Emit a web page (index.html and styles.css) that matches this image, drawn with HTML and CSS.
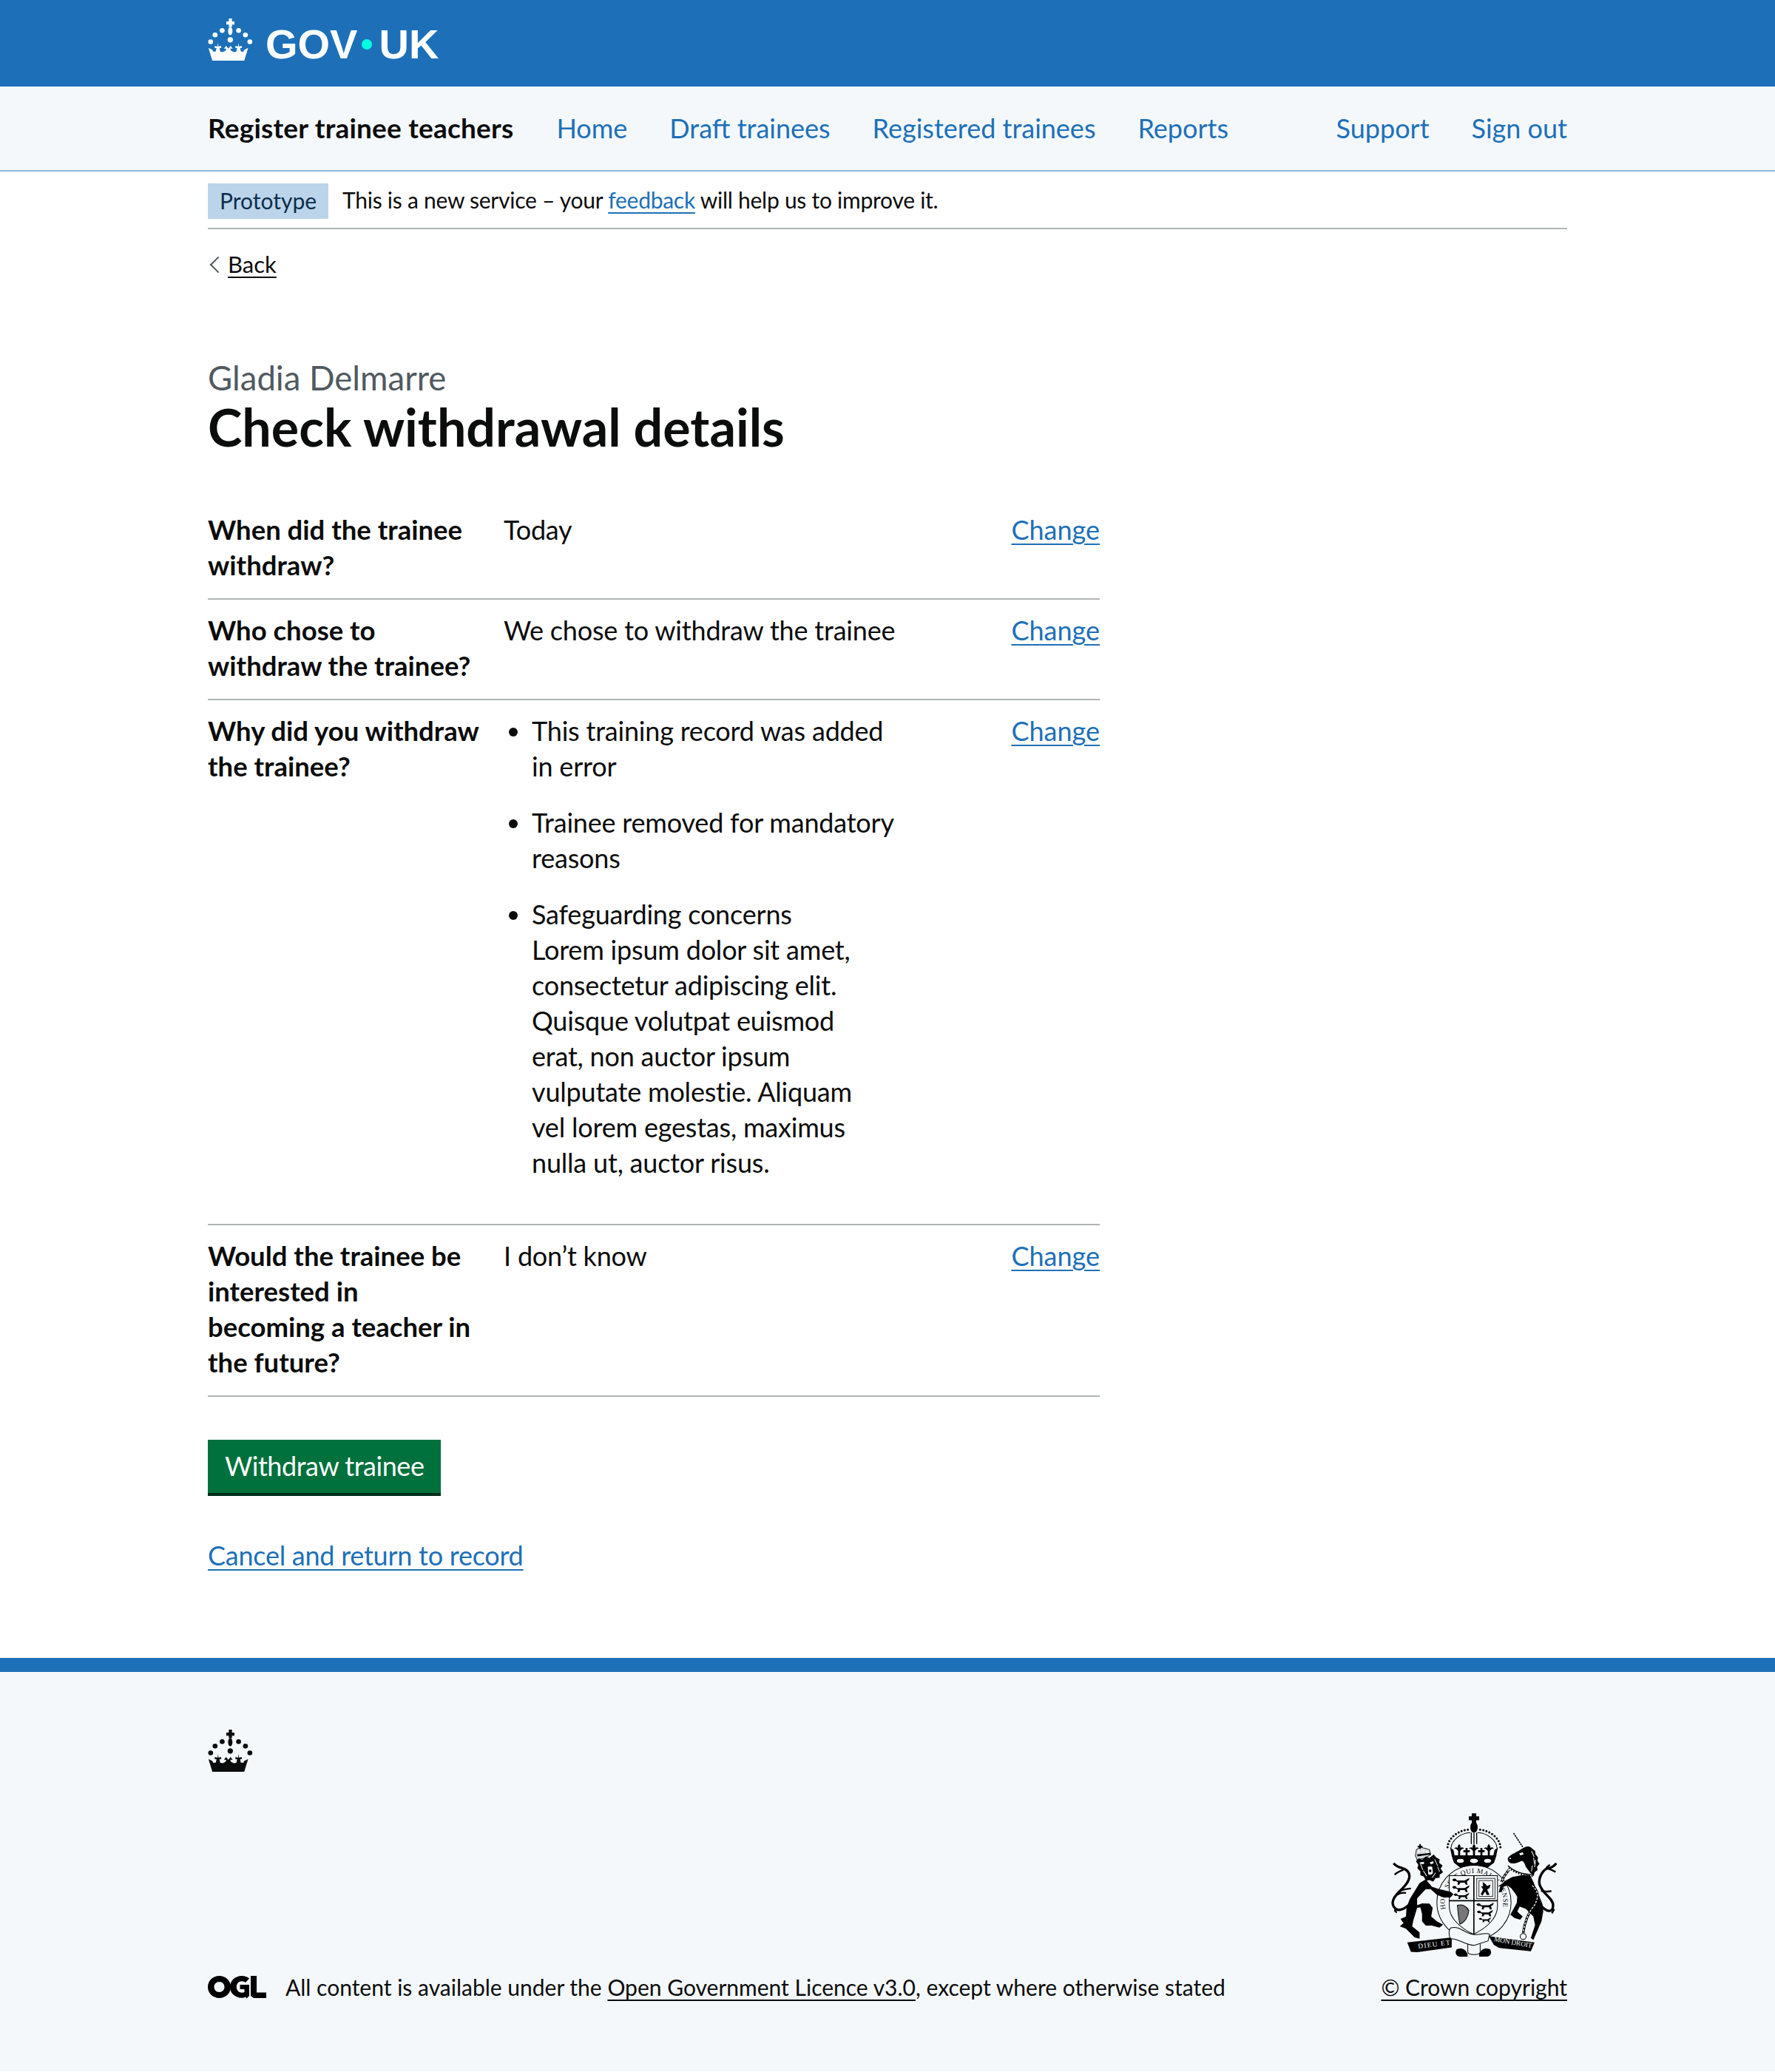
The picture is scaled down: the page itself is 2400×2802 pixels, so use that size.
FILE: index.html
```html
<!DOCTYPE html>
<html lang="en">
<head>
  <meta charset="UTF-8" />
  <title>Check withdrawal details - Register trainee teachers</title>
  <link rel="stylesheet" href="styles.css">
</head>
<body>

  <svg class="defs" aria-hidden="true">
    <symbol id="crown" viewBox="62 75 183 172">
      <path d="M147 75h13v12h10v13h-10v10h-13v-10h-10v-13h10z"/>
      <ellipse cx="153" cy="126" rx="9" ry="17"/>
      <circle cx="120" cy="124" r="10"/><circle cx="187" cy="124" r="10"/>
      <circle cx="91" cy="142" r="10"/><circle cx="215" cy="142" r="10"/>
      <circle cx="73" cy="170" r="10"/><circle cx="233" cy="170" r="10"/>
      <circle cx="153" cy="162" r="11"/>
      <path d="M64 195l16 8 4 8 10-2 3-13-8-1 2-8 10 3 2-16 2 16 10-3 2 8-8 1 3 14 10 2 12-6 3-8h-10l9-11 9 11 9-11 9 11h-10l3 8 12 6 10-2 3-14-8-1 2-8 10 3 2-16 2 16 10-3 2 8-8 1 3 13 10 2 4-8 16-8-16 52H80z"/>
    </symbol>
    <symbol id="passant" viewBox="0 0 76 26">
      <path d="M0 7l8-5 7 2 4 6h30l10-6 9-4-4 9-7 4 3 13h-7l-4-8H32l-4 8h-7l2-10-9-4-7 1z"/>
    </symbol>
  </svg>

  <header class="masthead">
    <div class="wrap masthead-inner">
      <svg class="crown"><use href="#crown"/></svg>
      <a class="logotype" href="#">GOV<span class="logo-dot"></span>UK</a>
    </div>
  </header>

  <nav class="service-nav">
    <div class="wrap nav-inner">
      <a class="service-name" href="#">Register trainee teachers</a>
      <a href="#">Home</a>
      <a href="#">Draft trainees</a>
      <a href="#">Registered trainees</a>
      <a href="#">Reports</a>
      <a class="nav-push" href="#">Support</a>
      <a href="#">Sign out</a>
    </div>
  </nav>

  <div class="wrap">
    <div class="phase-banner">
      <strong class="tag">Prototype</strong>
      <span class="phase-text">This is a new service – your <a class="link" href="#">feedback</a> will help us to improve it.</span>
    </div>

    <a class="back-link" href="#">Back</a>

    <main class="content">
      <span class="caption">Gladia Delmarre</span>
      <h1>Check withdrawal details</h1>

      <dl class="summary">
        <div class="summary-row">
          <dt>When did the trainee withdraw?</dt>
          <dd>Today</dd>
          <dd class="action"><a class="link" href="#">Change</a></dd>
        </div>
        <div class="summary-row">
          <dt>Who chose to withdraw the trainee?</dt>
          <dd>We chose to withdraw the trainee</dd>
          <dd class="action"><a class="link" href="#">Change</a></dd>
        </div>
        <div class="summary-row">
          <dt>Why did you withdraw the trainee?</dt>
          <dd>
            <ul class="reasons">
              <li>This training record was added in error</li>
              <li><span class="nowrap">Trainee removed for mandatory</span> reasons</li>
              <li>Safeguarding concerns<br>Lorem ipsum dolor sit amet, consectetur adipiscing elit. Quisque volutpat euismod erat, non auctor ipsum vulputate molestie. Aliquam vel lorem egestas, maximus nulla ut, auctor risus.</li>
            </ul>
          </dd>
          <dd class="action"><a class="link" href="#">Change</a></dd>
        </div>
        <div class="summary-row">
          <dt>Would the trainee be interested in becoming a teacher in the future?</dt>
          <dd>I don’t know</dd>
          <dd class="action"><a class="link" href="#">Change</a></dd>
        </div>
      </dl>

      <button class="button" type="submit">Withdraw trainee</button>
      <p class="cancel"><a class="link" href="#">Cancel and return to record</a></p>
    </main>
  </div>

  <footer class="footer">
    <div class="wrap">
      <svg class="crown crown-footer"><use href="#crown"/></svg>
      <div class="footer-meta">
        <div class="licence">
          <svg class="ogl" viewBox="0 0 79 32">
            <path fill-rule="evenodd" d="M15.5 1C24 1 31 7.500 31 16S24 31 15.500 31 0 24.500 0 16 7 1 15.500 1zm0 8C11.500 9 8.500 12 8.500 16s3 7 7 7 7-3 7-7-3-7-7-7z"/>
            <path d="M46 1c4 0 7.500 1.300 10 3.500L51 10c-1.300-1-3-1.700-5-1.700-4.200 0-7.200 3.300-7.200 7.700s3 7.700 7.200 7.700c1.300 0 2.500-.3 3.500-.8V19h-6v-6h12.500v15l-3.500 3.500-1.500-2c-1.500.8-3.200 1.200-5 1.200C37 30.700 30 24.500 30 16S37 1 46 1z"/>
            <path d="M58 1h8v22.500h13V31H62l-4-3z"/>
          </svg>
          <span>All content is available under the <a class="footer-link" href="#">Open Government Licence v3.0</a>, except where otherwise stated</span>
        </div>
        <div class="copyright">
          <svg class="arms" viewBox="70 65 670 585">
            <!-- crown -->
            <path d="M396 68h18v12h12v16h-12v10h-18V96h-12V80h12z"/>
            <ellipse cx="405" cy="124" rx="15" ry="22"/>
            <path class="dots" d="M298 205c2-40 50-72 92-72M512 205c-2-40-50-72-92-72"/>
            <path class="arch" d="M312 208c2-32 40-60 78-62M498 208c-2-32-40-60-78-62"/>
            <path d="M392 146h4v46h-4zM403 146h4v46h-4zM414 146h4v46h-4z"/>
            <g id="fleurs">
              <path transform="translate(345 222)" d="M0-30c6 6 8 12 4 18 4-6 14-6 16 2-4-2-8-2-10 2l-6 6v22h-8v-22l-6-6c-2-4-6-4-10-2 2-8 12-8 16-2-4-6-2-12 4-18z"/>
              <path transform="translate(405 222)" d="M0-30c6 6 8 12 4 18 4-6 14-6 16 2-4-2-8-2-10 2l-6 6v22h-8v-22l-6-6c-2-4-6-4-10-2 2-8 12-8 16-2-4-6-2-12 4-18z"/>
              <path transform="translate(465 222)" d="M0-30c6 6 8 12 4 18 4-6 14-6 16 2-4-2-8-2-10 2l-6 6v22h-8v-22l-6-6c-2-4-6-4-10-2 2-8 12-8 16-2-4-6-2-12 4-18z"/>
              <path d="M371 208h8v9h9v8h-9v20h-8v-20h-9v-8h9zM431 208h8v9h9v8h-9v20h-8v-20h-9v-8h9zM308 206l14 10 6 28h-12zM502 206l-14 10-6 28h12z"/>
            </g>
            <path d="M314 238h182l-10 30-26 20H350l-26-20z"/>
            <g class="paper"><ellipse cx="350" cy="260" rx="14" ry="8"/><ellipse cx="405" cy="260" rx="16" ry="9"/><ellipse cx="460" cy="260" rx="14" ry="8"/></g>

            <!-- garter and shield -->
            <circle class="paper ring" cx="405" cy="428" r="150"/>
            <path id="garter" fill="none" d="M303 487A118 118 0 1 1 470 526"/>
            <text class="garter-text"><textPath href="#garter" startOffset="34">HONI SOIT QUI MAL Y PENSE</textPath></text>
            <path class="paper ring" d="M305 320h195v125c0 50-50 90-97 112-47-22-98-62-98-112z"/>
            <path d="M402 320h5v237h-5zM305 419h195v5H305z"/>
            <use href="#passant" x="316" y="328" width="80" height="30"/>
            <use href="#passant" x="316" y="358" width="80" height="30"/>
            <use href="#passant" x="322" y="388" width="72" height="28"/>
            <rect class="frame" x="416" y="331" width="74" height="82"/>
            <rect class="frame" x="425" y="340" width="56" height="64"/>
            <path d="M440 346l10 6 8 10 14-6-4 14-10 6 10 22h-12l-6-14-10 16-8-4 10-20-8-12 8-2z"/>
            <use href="#passant" x="414" y="428" width="80" height="30"/>
            <use href="#passant" x="416" y="458" width="74" height="28"/>
            <use href="#passant" x="424" y="486" width="56" height="26"/>
            <path class="harp ring" d="M338 440c20-6 38 4 46 22-2 26-18 48-36 54-6-24-8-50-10-76z"/>

            <!-- lion -->
            <g transform="translate(60 150)">
              <path class="tail" d="M85 285C60 310 30 320 18 290 8 262 40 240 62 215 85 190 92 165 72 148 58 136 35 140 20 120"/>
              <path class="tail thin" d="M50 230C62 226 76 222 90 222M36 246C46 240 58 238 70 240M60 146C50 150 36 154 24 166M28 300C26 310 22 316 34 318"/>
              <path d="M150 185L175 215 205 225 250 235 262 245 250 258 225 258 195 248 170 225 150 225 115 262 115 290 135 282 165 283 178 300 172 335 195 355 220 368 205 380 175 372 150 372 135 355 135 325 128 298 115 300 100 350 95 375 125 400 125 425 105 420 85 400 70 385 45 375 60 362 48 345 70 335 72 300 85 265 110 225 125 200Z"/>
              <path class="crest" d="M108 90L112 65 128 55 150 60 165 65 170 85 145 100 115 105Z"/>
              <path d="M124 42h6v8h7v6h-7v6h-6v-6h-7v-6h7zM114 84l54-6 1 6-52 8z"/>
              <circle class="paper" cx="122" cy="72" r="4"/><circle class="paper" cx="140" cy="70" r="4"/><circle class="paper" cx="156" cy="74" r="4"/>
              <path d="M110 112L122 100 135 106 150 92 165 98 182 84 192 96 206 104 204 118 218 130 210 142 220 156 206 166 206 178 190 180 180 194 165 188 150 190 142 174 128 168 128 152 116 140 120 126Z"/>
              <path class="mane" d="M126 116l12 30M140 150l14 22M186 104l12 26M198 134l8 20M190 158l-14 20"/>
              <path class="paper" d="M128 116l14-2 2 8-12 2zM166 116l14-4 2 8-12 4zM158 134c6-2 14-2 18 0l3 24c-2 8-14 10-19 6z"/>
              <path d="M163 146c3-1 7-1 10 0l-1 10h-8z"/>
            </g>

            <!-- unicorn -->
            <g transform="translate(420 120)">
              <path class="horn" d="M145 28L182 84"/>
              <path d="M122 128C135 112 160 105 178 92 190 84 205 78 212 86L222 120 225 150 215 192 195 165C190 150 186 142 178 140 165 146 150 152 138 150 128 150 120 140 122 128Z"/>
              <path d="M210 82L222 92 232 100 234 114 244 126 242 140 250 152 240 164 242 178 230 186 226 202 215 190 225 150Z"/>
              <path class="mane" d="M218 100l10 24M226 128l4 24M220 160l-2 22M234 136l-4 30"/>
              <path class="paper" d="M168 110l14-4 4 8-14 4zM128 130l5-3 2 4-4 3z"/>
              <path class="collar" d="M122 160C150 186 190 196 226 196"/>
              <path class="beads" d="M126 168C150 190 190 200 222 202"/>
              <path d="M85 268L92 240 110 222 140 205 180 198 212 198 225 225 235 250 250 285 262 315 265 345 258 385 245 415 225 460 215 452 232 400 225 365 205 345 195 335 170 325 160 345 182 365 172 378 150 372 132 358 150 325 158 310 160 285 150 270 135 250 120 240 105 245 97 265Z"/>
              <path class="tail" d="M255 320C275 345 305 355 305 320 305 290 262 275 250 235 245 205 265 175 285 170 300 168 310 160 318 150"/>
              <path class="tail thin" d="M285 172C295 175 305 178 315 185M275 174C278 168 282 162 292 156M256 262C270 262 282 268 298 262M300 352C304 346 306 340 310 336"/>
              <path class="chain" d="M126 176L106 204 96 226M220 240C245 262 250 285 228 322 205 350 190 385 184 432"/>
              <path class="chain-link" d="M126 176L106 204 96 226M220 240C245 262 250 285 228 322 205 350 190 385 184 432"/>
              <circle class="paper ring" cx="184" cy="446" r="12"/>
            </g>

            <!-- motto -->
            <path d="M135 590L315 570 315 610 175 630 150 628ZM465 565L650 590 635 626 505 612 485 600Z"/>
            <path class="paper ring" d="M310 532c34-12 54 20 92 26 32 4 42-10 66-2l-6 28-56 18c-36-2-62-26-90-26-12 0-16-30-6-44z"/>
            <path d="M335 618c22-8 34 0 44 18v12h-30c-14 0-24-14-14-30zM470 618c-22-8-34 0-44 18v12h30c14 0 24-14 14-30z"/>
            <path class="ring unfilled" d="M380 595v34c0 14 50 14 50 0v-34"/>
            <text class="motto" transform="translate(180 615) rotate(-7)" textLength="130">DIEU ET</text>
            <text class="motto" transform="translate(485 585) rotate(10)" textLength="155">MON DROIT</text>
          </svg>
          <a class="footer-link" href="#">© Crown copyright</a>
        </div>
      </div>
    </div>
  </footer>

</body>
</html>
```

FILE: styles.css
```css
* {
  box-sizing: border-box;
  margin: 0;
  padding: 0;
}

body {
  font-family: Lato, Arial, sans-serif;
  font-size: 36px;
  line-height: 48px;
  color: #0b0c0c;
  background: #fff;
}

a {
  color: inherit;
  text-decoration-thickness: 2px;
  text-underline-offset: 5px;
}

.defs {
  display: none;
}

.wrap {
  width: 1838px;
  margin: 0 auto;
}

/* header */
.masthead {
  height: 117px;
  background: #1d70b8;
  color: #fff;
}

.masthead-inner {
  display: flex;
  align-items: flex-start;
  padding-top: 25px;
}

.crown {
  display: block;
  width: 61px;
  height: 57px;
  fill: currentColor;
}

.logotype {
  display: flex;
  align-items: center;
  margin: 4px 0 0 17px;
  font-family: "Liberation Sans", Arial, sans-serif;
  font-size: 56px;
  line-height: 62px;
  font-weight: 700;
  text-decoration: none;
}

.logo-dot {
  width: 14px;
  height: 14px;
  margin: 0 9px 0 6px;
  border-radius: 50%;
  background: #00ffe0;
}

/* service nav */
.service-nav {
  height: 115px;
  background: #f4f8fb;
  border-bottom: 2px solid #8fb8dc;
  color: #1d70b8;
  white-space: nowrap;
}

.nav-inner {
  display: flex;
  align-items: center;
  gap: 57px;
  height: 113px;
  padding-bottom: 2px;
}

.nav-inner a {
  text-decoration: none;
}

.nav-inner .service-name {
  margin-right: 1px;
  font-size: 37px;
  font-weight: 700;
  letter-spacing: 0.2px;
  color: #0b0c0c;
}

.nav-push {
  margin-left: auto;
}

/* phase banner */
.phase-banner {
  display: flex;
  align-items: center;
  gap: 19px;
  height: 78px;
  padding-top: 3px;
  border-bottom: 2px solid #b1b4b6;
  font-size: 30px;
}

.tag {
  padding: 0 16px 2px;
  font-weight: 400;
  line-height: 46px;
  background: #bbd4ea;
  color: #0c2d4a;
}

.phase-text {
  padding-bottom: 3px;
  letter-spacing: -0.26px;
}

.link {
  color: #1d70b8;
}

.back-link {
  display: inline-block;
  position: relative;
  margin-top: 24px;
  padding-left: 27px;
  font-size: 31px;
  line-height: 46px;
}

.back-link::before {
  content: "";
  position: absolute;
  left: 6px;
  top: 16px;
  width: 14px;
  height: 14px;
  border-left: 2px solid #505a5f;
  border-bottom: 2px solid #505a5f;
  transform: rotate(45deg);
}

/* main */
.content {
  width: 1206px;
  padding-top: 106px;
}

.caption {
  display: block;
  font-size: 45.500px;
  line-height: 50px;
  color: #505a5f;
}

h1 {
  margin-top: 2px;
  font-size: 70px;
  line-height: 78px;
  font-weight: 700;
}

.summary {
  margin-top: 59px;
}

.summary-row {
  display: grid;
  grid-template-columns: 400px 1fr auto;
  padding: 17px 0 21px;
  border-bottom: 2px solid #b1b4b6;
  letter-spacing: -0.2px;
}

.summary-row dt {
  width: 368px;
  font-size: 36.500px;
  font-weight: 700;
  letter-spacing: 0;
}

.reasons {
  width: 520px;
  padding-left: 38px;
  padding-bottom: 10px;
}

.reasons li {
  margin-bottom: 28px;
}

.nowrap {
  white-space: nowrap;
}

.action {
  letter-spacing: 0;
}

.button {
  display: block;
  margin-top: 58px;
  padding: 11px 23px 13px;
  border: 0;
  box-shadow: 0 4px 0 #002d18;
  font: inherit;
  letter-spacing: -0.45px;
  color: #fff;
  background: #00703c;
}

.cancel {
  margin-top: 60px;
  letter-spacing: -0.25px;
}

/* footer */
.footer {
  margin-top: 115px;
  height: 559px;
  border-top: 19px solid #1d70b8;
  background: #f4f8fb;
  font-size: 30px;
}

.crown-footer {
  position: relative;
  top: 78px;
}

.footer-meta {
  display: flex;
  justify-content: space-between;
  align-items: flex-end;
  padding-top: 133px;
}

.licence {
  display: flex;
  align-items: center;
  gap: 26px;
}

.ogl {
  width: 79px;
  height: 32px;
}

.copyright {
  display: flex;
  flex-direction: column;
  align-items: center;
}

/* coat of arms */
.arms {
  width: 224px;
  height: 196px;
  margin-bottom: 16px;
}

.paper {
  fill: #f4f8fb;
}

.ring {
  stroke: #000;
  stroke-width: 3;
}

.unfilled {
  fill: none;
}

.harp {
  fill: #777;
}

.frame {
  fill: none;
  stroke: #333;
  stroke-width: 3;
}

.crest {
  fill: #d8dcdf;
  stroke: #222;
  stroke-width: 3;
}

.mane {
  fill: none;
  stroke: #f4f8fb;
  stroke-width: 3;
}

.horn {
  fill: none;
  stroke: #000;
  stroke-width: 5;
  stroke-dasharray: 7 3;
}

.arch {
  fill: none;
  stroke: #000;
  stroke-width: 3;
}

.collar {
  fill: none;
  stroke: #000;
  stroke-width: 4;
}

.beads {
  fill: none;
  stroke: #000;
  stroke-width: 7;
  stroke-dasharray: 5 6;
}

.tail {
  fill: none;
  stroke: #000;
  stroke-width: 10;
  stroke-linejoin: round;
}

.tail.thin {
  stroke-width: 7;
}

.dots {
  fill: none;
  stroke: #000;
  stroke-width: 9;
  stroke-linecap: round;
  stroke-dasharray: 0 13;
}

.chain {
  fill: none;
  stroke: #000;
  stroke-width: 10;
}

.chain-link {
  fill: none;
  stroke: #f4f8fb;
  stroke-width: 4;
  stroke-dasharray: 9 5;
}

.garter-text {
  font-family: "Liberation Serif", serif;
  font-size: 28px;
  letter-spacing: 1.500px;
}

.motto {
  font-family: "Liberation Serif", serif;
  font-size: 28px;
  fill: #f4f8fb;
}
```
